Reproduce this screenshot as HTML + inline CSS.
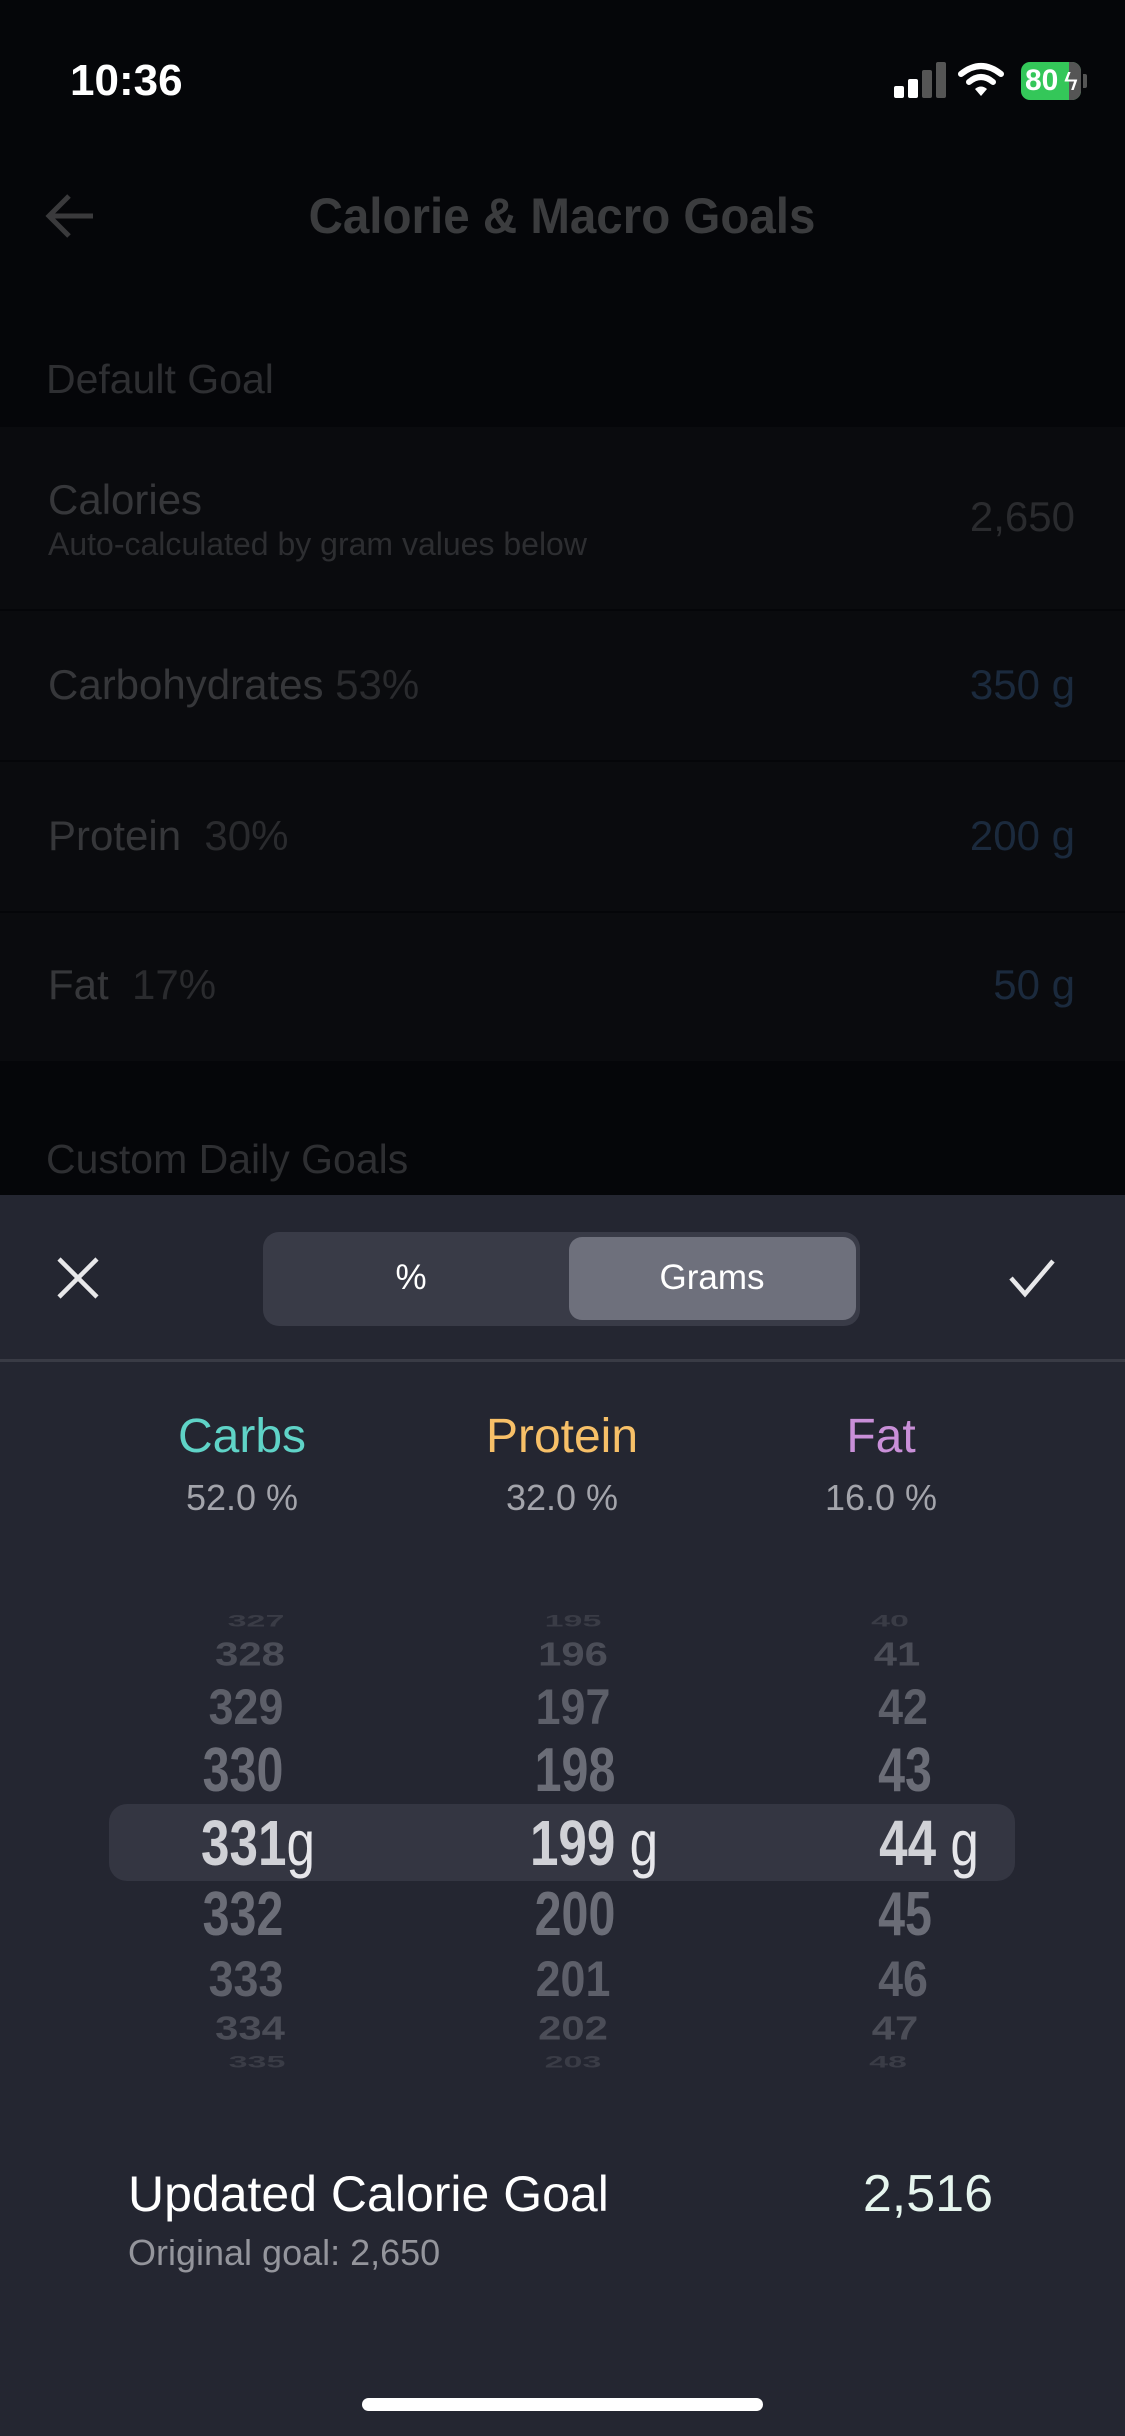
<!DOCTYPE html>
<html><head><meta charset="utf-8"><style>
*{margin:0;padding:0;box-sizing:border-box}
body{width:1125px;height:2436px;background:#050609;position:relative;overflow:hidden;font-family:"Liberation Sans",sans-serif}
.t{position:absolute;white-space:nowrap;height:80px;line-height:80px}
.c{transform:translateX(-50%)}
.r{transform:translateX(-100%)}
.n{position:absolute;white-space:nowrap;font-weight:bold;line-height:1}
</style></head><body>
<!-- status -->
<div class="t" style="left:70px;top:41px;font-size:44px;font-weight:bold;color:#fff">10:36</div>
<div style="position:absolute;left:894px;top:86px;width:10px;height:12px;background:#fff;border-radius:2px"></div>
<div style="position:absolute;left:908px;top:79px;width:10px;height:19px;background:#fff;border-radius:2px"></div>
<div style="position:absolute;left:922px;top:70px;width:10px;height:28px;background:#555;border-radius:2px"></div>
<div style="position:absolute;left:936px;top:62px;width:10px;height:36px;background:#555;border-radius:2px"></div>
<svg style="position:absolute;left:958px;top:62px" width="46" height="36" viewBox="0 0 46 36"><path d="M3 12 Q23 -4 43 12" stroke="#fff" stroke-width="6" fill="none" stroke-linecap="round"/><path d="M11 20 Q23 10 35 20" stroke="#fff" stroke-width="6" fill="none" stroke-linecap="round"/><path d="M17 27 L23 34 L29 27 Q23 22 17 27Z" fill="#fff"/></svg>
<div style="position:absolute;left:1021px;top:62px;width:60px;height:38px;background:#34c759;border-radius:9px;overflow:hidden"><div style="position:absolute;right:0;top:0;width:12px;height:38px;background:#555"></div><div style="position:absolute;left:4px;top:0;line-height:38px;font-size:30px;font-weight:bold;color:#fff">80</div><div style="position:absolute;left:43px;top:0;line-height:38px;font-size:26px;color:#fff">ϟ</div></div>
<div style="position:absolute;left:1083px;top:74px;width:4px;height:14px;background:#555;border-radius:0 2px 2px 0"></div>
<!-- header -->
<svg style="position:absolute;left:45px;top:190px" width="52" height="52" viewBox="0 0 52 52"><path d="M48 26 H5 M24 6 L4 26 L24 46" stroke="#3a3a3c" stroke-width="5" fill="none"/></svg>
<div class="t c" style="left:562px;top:176px;font-size:50px;font-weight:bold;color:#3b3c3e;transform:translateX(-50%) scaleX(.95)">Calorie &amp; Macro Goals</div>
<div class="t" style="left:46px;top:339px;font-size:41px;color:#2e2f32">Default Goal</div>
<div style="position:absolute;left:0;top:427px;width:1125px;height:634px;background:#0a0b0e"></div>
<div style="position:absolute;left:0;top:609px;width:1125px;height:2px;background:#050609"></div>
<div style="position:absolute;left:0;top:760px;width:1125px;height:2px;background:#050609"></div>
<div style="position:absolute;left:0;top:911px;width:1125px;height:2px;background:#050609"></div>
<div class="t" style="left:48px;top:460px;font-size:42px;color:#36373a">Calories</div>
<div class="t" style="left:48px;top:504px;font-size:32px;color:#2d2e31">Auto-calculated by gram values below</div>
<div class="t r" style="left:1075px;top:477px;font-size:42px;color:#2a2b2e">2,650</div>
<div class="t" style="left:48px;top:645px;font-size:42px;color:#36373a">Carbohydrates <span style="color:#2a2b2e">53%</span></div>
<div class="t r" style="left:1075px;top:645px;font-size:42px;color:#1b2a3d">350 g</div>
<div class="t" style="left:48px;top:796px;font-size:42px;color:#36373a">Protein <span style="color:#2a2b2e">&nbsp;30%</span></div>
<div class="t r" style="left:1075px;top:796px;font-size:42px;color:#1b2a3d">200 g</div>
<div class="t" style="left:48px;top:945px;font-size:42px;color:#36373a">Fat <span style="color:#2a2b2e">&nbsp;17%</span></div>
<div class="t r" style="left:1075px;top:945px;font-size:42px;color:#1b2a3d">50 g</div>
<div class="t" style="left:46px;top:1119px;font-size:41px;color:#2e2f32">Custom Daily Goals</div>
<!-- sheet -->
<div style="position:absolute;left:0;top:1195px;width:1125px;height:1241px;background:#242631"></div>
<svg style="position:absolute;left:56px;top:1256px" width="44" height="44" viewBox="0 0 44 44"><path d="M3 3 L41 41 M41 3 L3 41" stroke="#e8e8ea" stroke-width="4.5" fill="none"/></svg>
<div style="position:absolute;left:263px;top:1232px;width:597px;height:94px;background:#393b47;border-radius:16px"></div>
<div style="position:absolute;left:569px;top:1237px;width:287px;height:83px;background:#6e707c;border-radius:13px"></div>
<div class="t c" style="left:411px;top:1238px;font-size:35px;color:#fff">%</div>
<div class="t c" style="left:712px;top:1238px;font-size:35px;color:#fff">Grams</div>
<svg style="position:absolute;left:1008px;top:1258px" width="48" height="40" viewBox="0 0 48 40"><path d="M3 20 L17 36 L45 3" stroke="#e8e8ea" stroke-width="4.5" fill="none"/></svg>
<div style="position:absolute;left:0;top:1359px;width:1125px;height:3px;background:#393b45"></div>
<div class="t c" style="left:242px;top:1397px;font-size:48px;color:#5fd3c7">Carbs</div>
<div class="t c" style="left:562px;top:1397px;font-size:48px;color:#f7c068">Protein</div>
<div class="t c" style="left:881px;top:1397px;font-size:48px;color:#c98fd8">Fat</div>
<div class="t c" style="left:242px;top:1458px;font-size:36px;color:#a3a4ab">52.0 %</div>
<div class="t c" style="left:562px;top:1458px;font-size:36px;color:#a3a4ab">32.0 %</div>
<div class="t c" style="left:881px;top:1458px;font-size:36px;color:#a3a4ab">16.0 %</div>
<!-- picker -->
<div style="position:absolute;left:109px;top:1804px;width:906px;height:77px;background:#343642;border-radius:18px"></div>
<div class="n" style="left:256px;top:1621px;font-size:34px;color:#3a3c46;transform:translate(-50%,-50%) scale(1,.5)">327</div>
<div class="n" style="left:573px;top:1621px;font-size:34px;color:#3a3c46;transform:translate(-50%,-50%) scale(1,.5)">195</div>
<div class="n" style="left:890px;top:1621px;font-size:34px;color:#3a3c46;transform:translate(-50%,-50%) scale(1,.5)">40</div>
<div class="n" style="left:250px;top:1655px;font-size:44px;color:#4b4d57;transform:translate(-50%,-50%) scale(.95,.75)">328</div>
<div class="n" style="left:573px;top:1655px;font-size:44px;color:#4b4d57;transform:translate(-50%,-50%) scale(.95,.75)">196</div>
<div class="n" style="left:897px;top:1655px;font-size:44px;color:#4b4d57;transform:translate(-50%,-50%) scale(.95,.75)">41</div>
<div class="n" style="left:246px;top:1707px;font-size:56px;color:#5d5f69;transform:translate(-50%,-50%) scale(.8,.9)">329</div>
<div class="n" style="left:573px;top:1707px;font-size:56px;color:#5d5f69;transform:translate(-50%,-50%) scale(.8,.9)">197</div>
<div class="n" style="left:903px;top:1707px;font-size:56px;color:#5d5f69;transform:translate(-50%,-50%) scale(.8,.9)">42</div>
<div class="n" style="left:243px;top:1771px;font-size:62px;color:#6b6d77;transform:translate(-50%,-50%) scale(.78,1)">330</div>
<div class="n" style="left:575px;top:1771px;font-size:62px;color:#6b6d77;transform:translate(-50%,-50%) scale(.78,1)">198</div>
<div class="n" style="left:905px;top:1771px;font-size:62px;color:#6b6d77;transform:translate(-50%,-50%) scale(.78,1)">43</div>
<div class="n" style="left:258px;top:1843px;font-size:64px;color:#d0d1d6;transform:translate(-50%,-50%) scale(.8,1)">331<span style="font-weight:normal;color:#e6e6ea">g</span></div>
<div class="n" style="left:594px;top:1843px;font-size:64px;color:#d0d1d6;transform:translate(-50%,-50%) scale(.8,1)">199<span style="font-weight:normal;color:#e6e6ea">&nbsp;g</span></div>
<div class="n" style="left:929px;top:1843px;font-size:64px;color:#d0d1d6;transform:translate(-50%,-50%) scale(.8,1)">44<span style="font-weight:normal;color:#e6e6ea">&nbsp;g</span></div>
<div class="n" style="left:243px;top:1915px;font-size:62px;color:#6b6d77;transform:translate(-50%,-50%) scale(.78,1)">332</div>
<div class="n" style="left:575px;top:1915px;font-size:62px;color:#6b6d77;transform:translate(-50%,-50%) scale(.78,1)">200</div>
<div class="n" style="left:905px;top:1915px;font-size:62px;color:#6b6d77;transform:translate(-50%,-50%) scale(.78,1)">45</div>
<div class="n" style="left:246px;top:1979px;font-size:56px;color:#5d5f69;transform:translate(-50%,-50%) scale(.8,.9)">333</div>
<div class="n" style="left:573px;top:1979px;font-size:56px;color:#5d5f69;transform:translate(-50%,-50%) scale(.8,.9)">201</div>
<div class="n" style="left:903px;top:1979px;font-size:56px;color:#5d5f69;transform:translate(-50%,-50%) scale(.8,.9)">46</div>
<div class="n" style="left:250px;top:2029px;font-size:44px;color:#4b4d57;transform:translate(-50%,-50%) scale(.95,.75)">334</div>
<div class="n" style="left:573px;top:2029px;font-size:44px;color:#4b4d57;transform:translate(-50%,-50%) scale(.95,.75)">202</div>
<div class="n" style="left:895px;top:2029px;font-size:44px;color:#4b4d57;transform:translate(-50%,-50%) scale(.95,.75)">47</div>
<div class="n" style="left:257px;top:2062px;font-size:34px;color:#3a3c46;transform:translate(-50%,-50%) scale(1,.5)">335</div>
<div class="n" style="left:573px;top:2062px;font-size:34px;color:#3a3c46;transform:translate(-50%,-50%) scale(1,.5)">203</div>
<div class="n" style="left:888px;top:2062px;font-size:34px;color:#3a3c46;transform:translate(-50%,-50%) scale(1,.5)">48</div>
<!-- footer -->
<div class="t" style="left:128px;top:2154px;font-size:50px;color:#fff">Updated Calorie Goal</div>
<div class="t r" style="left:993px;top:2154px;font-size:52px;color:#e6f5ee">2,516</div>
<div class="t" style="left:128px;top:2213px;font-size:36px;color:#94959c">Original goal: 2,650</div>
<div style="position:absolute;left:362px;top:2398px;width:401px;height:13px;background:#fff;border-radius:7px"></div>
</body></html>
